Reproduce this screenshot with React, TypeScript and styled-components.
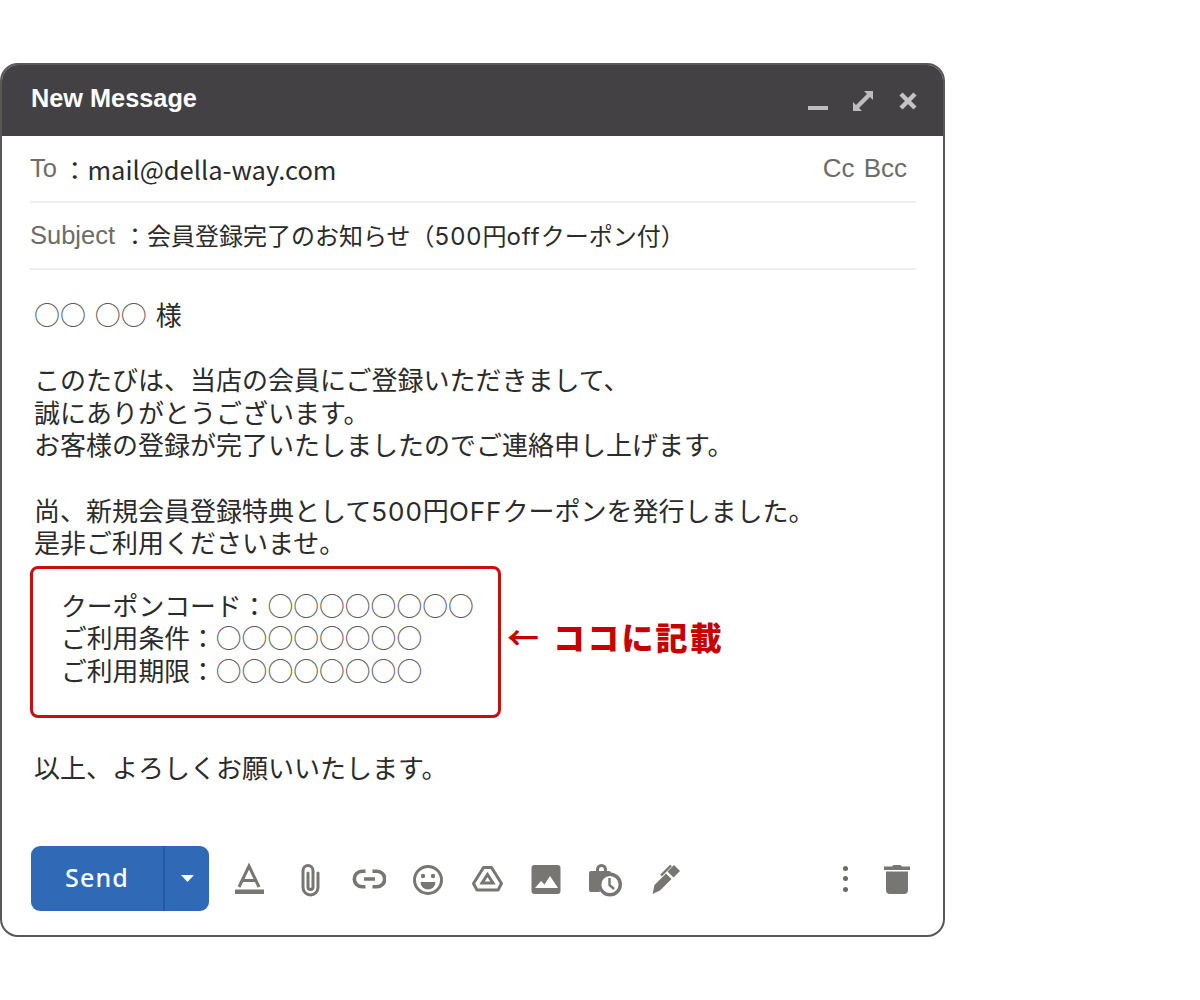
import styled, { createGlobalStyle } from "styled-components";

const GlobalStyle = createGlobalStyle`
  html, body {
    margin: 0;
    background: #fff;
  }
  body {
    font-family: "Noto Sans CJK JP", "Noto Sans", sans-serif;
  }
`;

export default function App() {
  return (
    <>
      <GlobalStyle />
      <Page>
        <ComposeWindow>
          <TitleBar>
            <Title>New Message</Title>
            <WindowControls>
              <svg width="20" height="20" viewBox="0 0 20 20">
                <rect x="0" y="15" width="20" height="4" fill="#bdbdbd" />
              </svg>
              <svg width="22" height="22" viewBox="0 0 22 22" fill="#bdbdbd">
                <path d="M12 1h9v9l-3-3-11 11 3 3H1v-9l3 3L15 4z" />
              </svg>
              <svg width="20" height="20" viewBox="0 0 20 20">
                <path d="M3 3l14 14M17 3L3 17" stroke="#c4c4c4" strokeWidth="4.4" />
              </svg>
            </WindowControls>
          </TitleBar>

          <ToRow>
            <FieldLabel>To</FieldLabel>
            <ToValue>：mail@della-way.com</ToValue>
            <CcBcc>Cc Bcc</CcBcc>
          </ToRow>
          <SubjectRow>
            <FieldLabel>Subject</FieldLabel>
            <SubjectValue>
              ：会員登録完了のお知らせ（<Latin>500</Latin>円<Latin>off</Latin>クーポン付）
            </SubjectValue>
          </SubjectRow>

          <MailBody>
            <Greeting>
              <Marks>○○</Marks> <Marks>○○</Marks> 様
            </Greeting>
            <Line />
            <Line>このたびは、当店の会員にご登録いただきまして、</Line>
            <Line>誠にありがとうございます。</Line>
            <Line>お客様の登録が完了いたしましたのでご連絡申し上げます。</Line>
            <Line />
            <Line>
              尚、新規会員登録特典として<Latin>500</Latin>円<Latin>OFF</Latin>クーポンを発行しました。
            </Line>
            <Line>是非ご利用くださいませ。</Line>
            <CouponRow>
              <CouponBox>
                <Line>
                  クーポンコード：<Marks>○○○○○○○○</Marks>
                </Line>
                <Line>
                  ご利用条件：<Marks>○○○○○○○○</Marks>
                </Line>
                <Line>
                  ご利用期限：<Marks>○○○○○○○○</Marks>
                </Line>
              </CouponBox>
              <Callout>
                <CalloutArrow>←</CalloutArrow>ココに記載
              </Callout>
            </CouponRow>
            <Closing>以上、よろしくお願いいたします。</Closing>
          </MailBody>

          <Toolbar>
            <SendButton>
              <SendLabel>Send</SendLabel>
              <SendMenu>
                <svg width="13" height="7" viewBox="0 0 13 7">
                  <path d="M0 0h13L6.500 7z" fill="#fff" />
                </svg>
              </SendMenu>
            </SendButton>
            <ToolIcons>
              <ToolIcon viewBox="0 0 36 36">
                <path d="M8 26L18 5l10 21M11.500 19.500h13" fill="none" strokeWidth="3" />
                <rect x="4" y="28.500" width="29" height="4.500" stroke="none" />
              </ToolIcon>
              <ToolIcon viewBox="0 0 36 36">
                <path
                  d="M18 12v14a2.500 2.500 0 0 0 5 0V9.500a5 5 0 0 0-10 0V26.500a7.500 7.500 0 0 0 15 0V12"
                  fill="none"
                  strokeWidth="3"
                  strokeLinecap="round"
                />
              </ToolIcon>
              <ToolIcon viewBox="0 0 36 36">
                <path
                  d="M15.500 10.300H12a7.700 7.700 0 0 0 0 15.400h3.500M22.500 10.300H27a7.700 7.700 0 0 1 0 15.400h-4.500M14 18h11"
                  fill="none"
                  strokeWidth="3.600"
                />
              </ToolIcon>
              <ToolIcon viewBox="0 0 36 36">
                <circle cx="19" cy="19" r="13.500" fill="none" strokeWidth="3" />
                <circle cx="14" cy="15" r="2.200" stroke="none" />
                <circle cx="24" cy="15" r="2.200" stroke="none" />
                <path d="M11.500 21h15a7.500 7.500 0 0 1-15 0z" stroke="none" />
              </ToolIcon>
              <ToolIcon viewBox="0 0 36 36">
                <path
                  d="M14.500 6.500h8l10 16-3.500 6.500H8l-3.500-6.500z"
                  fill="none"
                  strokeWidth="3"
                  strokeLinejoin="round"
                />
                <path d="M18.500 13.500l5.500 8.500H13z" fill="none" strokeWidth="3" />
              </ToolIcon>
              <ToolIcon viewBox="0 0 36 36">
                <rect x="3.500" y="4" width="29" height="29" rx="3" stroke="none" />
                <path d="M7 27l6-7 3.500 3.500L22 15l8 12z" fill="#fff" stroke="none" />
              </ToolIcon>
              <ToolIcon viewBox="0 0 36 36">
                <path
                  d="M2 12a2 2 0 0 1 2-2h5V8.500a5.500 5.500 0 0 1 11 0V10h2a2 2 0 0 1 2 2v4a11 11 0 0 0-11 15H4a2 2 0 0 1-2-2z"
                  stroke="none"
                />
                <path d="M12 10V8.500a2.500 2.500 0 0 1 5 0V10z" fill="#fff" stroke="none" />
                <circle cx="23" cy="23.500" r="10.300" fill="#fff" strokeWidth="3.400" />
                <path d="M22.500 17v7l4.500 4" fill="none" strokeWidth="2.400" />
              </ToolIcon>
              <ToolIcon viewBox="0 0 36 36">
                <path d="M7.500 24L19 12.500l5.500 5.500L13 29.500 5.500 33z" stroke="none" />
                <path d="M20.500 10.500L27 4l6 6-6.500 6.500z" stroke="none" />
                <path d="M14 14.500L24 4.500" fill="none" strokeWidth="2.400" />
              </ToolIcon>
            </ToolIcons>
            <ToolbarRight>
              <MoreDots>
                <Dot />
                <Dot />
                <Dot />
              </MoreDots>
              <svg width="28" height="30" viewBox="0 0 28 30" fill="#777672">
                <path d="M9 2.500L10.500 1h7L19 2.500h8V6H1V2.500z" />
                <path d="M3 7.500h22V26a4 4 0 0 1-4 4H7a4 4 0 0 1-4-4z" />
              </svg>
            </ToolbarRight>
          </Toolbar>
        </ComposeWindow>
      </Page>
    </>
  );
}

const Page = styled.div`
  width: 1200px;
  height: 1000px;
  padding-top: 63px;
  box-sizing: border-box;
  overflow: hidden;
`;

const ComposeWindow = styled.div`
  width: 945px;
  height: 874px;
  box-sizing: border-box;
  display: flex;
  flex-direction: column;
  border: 2px solid #5a5856;
  border-radius: 18px;
  overflow: hidden;
`;

const TitleBar = styled.div`
  height: 71px;
  flex: none;
  box-sizing: border-box;
  display: flex;
  align-items: center;
  justify-content: space-between;
  padding: 0 25px 4px 29px;
  background: #434144;
`;

const Title = styled.div`
  font-family: "Liberation Sans", Arial, sans-serif;
  font-size: 25.300px;
  font-weight: 700;
  color: #fff;
`;

const WindowControls = styled.div`
  display: flex;
  align-items: center;
  gap: 24px;
  margin-top: 5px;
`;

const FieldRow = styled.div`
  margin: 0 27px 0 28px;
  display: flex;
  align-items: center;
  border-bottom: 2px solid #eeeeee;
`;

const ToRow = styled(FieldRow)`
  height: 65px;
`;

const SubjectRow = styled(FieldRow)`
  height: 65px;
`;

const FieldLabel = styled.span`
  font-family: "Liberation Sans", Arial, sans-serif;
  font-size: 25.500px;
  color: #6d6c68;
  margin-top: 0;
`;

const ToValue = styled.span`
  font-size: 25.500px;
  color: #2b2b2b;
  margin-left: 5px;
  margin-top: -1px;
`;

const SubjectValue = styled.span`
  font-size: 24px;
  color: #2b2b2b;
  margin-left: 8px;
  margin-top: -3px;
`;

const Latin = styled.span`
  font-family: Inter, "Noto Sans", sans-serif;
  letter-spacing: 1px;
`;

const Marks = styled.span`
  color: #5c5c5c;
`;

const CcBcc = styled.span`
  margin-left: auto;
  margin-right: 9px;
  font-family: "Liberation Sans", Arial, sans-serif;
  font-size: 26px;
  word-spacing: 2px;
  color: #6d6c68;
`;

const MailBody = styled.div`
  padding: 28px 0 0 32px;
  color: #2b2b2b;
  font-size: 26px;
`;

const Line = styled.div`
  height: 32.600px;
  line-height: 32.600px;
  white-space: pre;
`;

const Greeting = styled(Line)`
  word-spacing: 3px;
`;

const CouponRow = styled.div`
  display: flex;
  align-items: center;
  margin: 7px 0 0 -4px;
`;

const CouponBox = styled.div`
  width: 471px;
  height: 152px;
  box-sizing: border-box;
  padding: 20px 0 0 28px;
  border: 3.500px solid #c70f12;
  border-radius: 8px;
  font-size: 25.800px;
`;

const Callout = styled.div`
  margin: 0 0 12px 6px;
  display: flex;
  align-items: center;
  font-size: 32px;
  font-weight: 900;
  letter-spacing: 2.200px;
  color: #c70000;
`;

const CalloutArrow = styled.span`
  width: 46px;
  font-weight: 700;
`;

const Closing = styled.div`
  margin-top: 33px;
  height: 32.600px;
  line-height: 32.600px;
`;

const Toolbar = styled.div`
  margin-top: auto;
  padding: 0 32px 24px 29px;
  display: flex;
  align-items: center;
`;

const SendButton = styled.div`
  width: 178px;
  height: 65px;
  flex: none;
  display: flex;
  border-radius: 9px;
  overflow: hidden;
  background: #306ab7;
`;

const SendLabel = styled.div`
  width: 134px;
  box-sizing: border-box;
  border-right: 2px solid #2458a3;
  padding-bottom: 3px;
  display: flex;
  align-items: center;
  justify-content: center;
  font-family: "Noto Sans", sans-serif;
  font-size: 25px;
  font-weight: 500;
  letter-spacing: 1.200px;
  color: #fff;
`;

const SendMenu = styled.div`
  flex: 1;
  display: flex;
  align-items: center;
  justify-content: center;
`;

const ToolIcons = styled.div`
  margin-left: 22px;
  display: flex;
  align-items: center;
  gap: 23.400px;
`;

const ToolIcon = styled.svg`
  width: 36px;
  height: 36px;
  fill: #777672;
  stroke: #777672;
  flex: none;
`;

const ToolbarRight = styled.div`
  margin-left: auto;
  display: flex;
  align-items: center;
  gap: 35px;
`;

const MoreDots = styled.div`
  display: flex;
  flex-direction: column;
  gap: 5.500px;
`;

const Dot = styled.span`
  width: 5px;
  height: 5px;
  border-radius: 50%;
  background: #6b6a66;
`;
